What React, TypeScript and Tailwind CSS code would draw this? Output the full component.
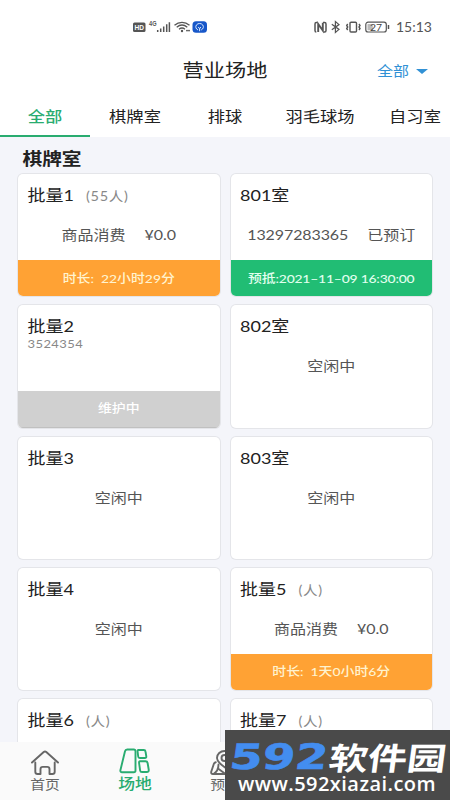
import React from "react";

function StatusBar() {
  return (
    <div className="flex h-[54px] items-center justify-between pl-[133px] pr-[18px] text-[#555]">
      <div className="flex items-center">
        <svg width="76" height="14" viewBox="0 0 76 14" fill="none" stroke="currentColor">
          <rect x="0" y="2.5" width="12.5" height="9.5" rx="1.5" fill="#555" stroke="none" />
          <text x="1.5" y="9.8" fontSize="7" fontWeight="700" fill="#fff" stroke="none" fontFamily="Liberation Sans, sans-serif" textLength="9.500" lengthAdjust="spacingAndGlyphs">HD</text>
          <text x="16" y="6" fontSize="6.500" fontWeight="700" fill="#555" stroke="none" fontFamily="Liberation Sans, sans-serif" textLength="7.500" lengthAdjust="spacingAndGlyphs">4G</text>
          <path d="M24.700 10v2M27.700 8.500v3.500M30.700 6.500V12M33.700 4.200V12M36.400 2.200V12" strokeWidth="1.500" />
          <path d="M41.500 5.200C46 1.300 52 1.300 56.500 5.200M43.700 7.200C47 4.500 51 4.500 54.300 7.200M46 9.200c2-1.600 4-1.600 6 0" strokeWidth="1.300" />
          <circle cx="49" cy="11" r="1.200" fill="currentColor" stroke="none" />
          <path d="M53 10.500h4M54 9.700v2M56 9.700v2" strokeWidth=".8" />
          <rect x="59.500" y="1.200" width="14.500" height="11.600" rx="3.500" fill="#1757c9" stroke="none" />
          <path d="M65 10C62.800 9 62.200 6.600 63.500 4.900c1.500-1.900 4.700-1.900 6.200 0 1.300 1.700.7 4.100-1.500 5.100M65.300 7l1.300 1.800L67.900 7M66.600 8.800v2.400" stroke="#d9e9ff" strokeWidth="1" />
        </svg>
      </div>
      <div className="flex items-center">
        <svg width="78" height="14" viewBox="0 0 78 14" fill="none" stroke="currentColor">
          <path d="M3.600 2.500H2.300Q1 2.500 1 4v6.500Q1 12 2.300 12M9 2.500h1.600Q12 2.500 12 4v6.500q0 1.500-1.300 1.500H9.500" strokeWidth="1.500" />
          <path d="M4.200 12V4L8.800 10.500V2.800" strokeWidth="1.900" />
          <path d="M17.800 4.200l7.200 5.200-3.600 3V1.600l3.600 3-7.200 5.200" strokeWidth="1.200" />
          <rect x="36" y="2.200" width="6.500" height="9.800" rx="1" strokeWidth="1.400" />
          <path d="M33.700 4l-1 1.500 1 1.500-1 1.500 1 1.500M45 4l1 1.500L45 7l1 1.500-1 1.500" strokeWidth="1.400" />
          <rect x="51.800" y="2.200" width="20.500" height="9.800" rx="2.300" strokeWidth="1.200" />
          <rect x="53.500" y="3.900" width="5.300" height="6.400" rx=".5" fill="#bbb" stroke="none" />
          <path d="M74.500 5v4" strokeWidth="1.500" />
          <text x="56" y="10.600" fontSize="9.500" fill="#444" stroke="none" fontFamily="Lato, sans-serif" textLength="12" lengthAdjust="spacingAndGlyphs">27</text>
        </svg>
        <span className="ml-[4px] w-[36px] scale-y-[.9] whitespace-nowrap text-[14px] leading-none">15:13</span>
      </div>
    </div>
  );
}

const squash = "inline-block whitespace-nowrap leading-none scale-y-[.88]";

type Room = {
  name: string;
  people?: string;
  note?: string;
  body?: string[];
  footer?: string;
  tone?: string;
};

const rooms: Room[] = [
  { name: "批量1", people: "(55人)", body: ["商品消费", "¥0.0"], footer: "时长:  22小时29分", tone: "bg-[#ffa234] text-[#fff3cf]" },
  { name: "801室", body: ["13297283365", "已预订"], footer: "预抵:2021–11–09 16:30:00", tone: "bg-[#21bd74] text-[#e0ffee] tracking-[-.2px]" },
  { name: "批量2", note: "3524354", footer: "维护中", tone: "bg-[#d0d0d0] text-white border-b border-[#c0c0c0]" },
  { name: "802室", body: ["空闲中"] },
  { name: "批量3", body: ["空闲中"] },
  { name: "803室", body: ["空闲中"] },
  { name: "批量4", body: ["空闲中"] },
  { name: "批量5", people: "(人)", body: ["商品消费", "¥0.0"], footer: "时长:  1天0小时6分", tone: "bg-[#ffa234] text-[#fff3cf]" },
  { name: "批量6", people: "(人)" },
  { name: "批量7", people: "(人)" },
];

function RoomCard({ room }: { room: Room }) {
  return (
    <div className="flex h-[122.3px] flex-col overflow-hidden rounded-[5px] bg-white shadow-[0_0_0_1px_#e4e5e9]">
      <div className="flex h-[42px] shrink-0 items-center pl-[9.500px]">
        <span className={squash + " text-[18px] text-[#222]"}>{room.name}</span>
        {room.people && <span className={squash + " ml-[12px] mt-[4px] text-[14.500px] tracking-[.7px] text-[#888]"}>{room.people}</span>}
      </div>
      {room.note && <span className={squash + " -mt-[9px] ml-[9.500px] w-fit text-[13px] tracking-[.4px] text-[#888]"}>{room.note}</span>}
      {room.body && (
        <div className="flex h-[38px] items-center justify-center gap-[19px] text-[16px] text-[#555]">
          {room.body.map((t) => (
            <span key={t} className={squash + (t.length > 6 ? " -tracking-[.1px]" : "")}>{t}</span>
          ))}
        </div>
      )}
      {room.footer && (
        <div className={"mt-auto flex h-[36.500px] items-center justify-center pt-px " + room.tone}>
          <span className="inline-block scale-y-[.88] whitespace-pre text-[13.900px] font-medium leading-none">{room.footer}</span>
        </div>
      )}
    </div>
  );
}

const tabs = [
  { label: "全部", width: "w-[90px]" },
  { label: "棋牌室", width: "w-[90px]" },
  { label: "排球", width: "w-[90px]" },
  { label: "羽毛球场", width: "w-[100px]" },
  { label: "自习室", width: "w-[90px]" },
];

function BottomNav() {
  return (
    <nav className="absolute bottom-0 left-0 flex h-[58px] w-[450px] bg-[#fafafa] text-[#666]">
      <div className="flex w-[90px] flex-col items-center pt-[7px]">
        <svg width="30" height="27" viewBox="0 0 30 27" fill="none" stroke="currentColor" strokeWidth="1.900" strokeLinecap="round" strokeLinejoin="round">
          <path d="M2 13.500L13.700 3q1.300-1.100 2.600 0L28 13.500M5.300 13.500v9.200q0 2.300 2.300 2.300h2.900v-4.800q0-2.300 2.300-2.300h4.400q2.300 0 2.300 2.300V25h2.900q2.300 0 2.300-2.300v-9.200" />
        </svg>
        <span className={squash + " mt-px text-[14.800px]"}>首页</span>
      </div>
      <div className="flex w-[90px] flex-col items-center pt-[5px] text-[#29ac70]">
        <svg width="32" height="27" viewBox="0 0 32 27" fill="none" stroke="currentColor" strokeWidth="1.900" strokeLinejoin="round">
          <path d="M8.200 2.500h6.600q1.700 0 1.700 1.700v19.200q0 1.800-1.800 1.800H3.100q-2.100 0-1.700-2L6 4.300q.4-1.800 2.200-1.800z" />
          <path d="M19.300 3h5.500q1.500 0 1.700 1.500l.8 4.800q.2 1.700-1.500 1.700h-5q-1.500 0-1.600-1.500l-.6-5q-.1-1.500.7-1.500z" />
          <path d="M21 14.300h5.500q1.800 0 2.100 1.700l1.100 6.500q.4 2.500-2 2.500h-4.700q-1.700 0-1.900-1.700l-1-7.200q-.2-1.800.9-1.800z" />
        </svg>
        <span className={squash + " mt-[2px] text-[16.800px] font-medium"}>场地</span>
      </div>
      <div className="flex w-[90px] flex-col items-center pt-[8px]">
        <svg width="30" height="26" viewBox="0 0 30 26" fill="none" stroke="currentColor" strokeWidth="1.900" strokeLinejoin="round" strokeLinecap="round">
          <path d="M15 17.500C10 14 7 11.500 7 8a7.500 7 0 0 1 15 0c0 3.500-2 6-7 9.500z" />
          <circle cx="14.500" cy="8" r="3" />
          <path d="M5.800 12.200Q4.300 12.500 3.800 14L1.300 21.500Q.7 24 3 24h24q2.300 0 1.700-2.500L26.200 14q-.5-1.500-2-1.800M8.500 14.500Q8.500 21 3.500 24M8 18.500L15.500 24" />
        </svg>
        <span className={squash + " mt-px text-[14.800px]"}>预订</span>
      </div>
    </nav>
  );
}

function SiteBadge() {
  return (
    <div className="absolute bottom-0 right-0 flex h-[70px] w-[225px] flex-col overflow-hidden bg-[#4a4a4a]">
      <div className="flex h-[43px] items-center pl-[5px] pt-[12px]">
        <span className="inline-block w-[98px] origin-left scale-x-[1.340] -skew-x-6 font-['DejaVu_Sans',sans-serif] text-[35px] font-bold leading-none text-[#438df0] [-webkit-text-stroke:.6px_#438df0]">592</span>
        <span className="ml-[1px] inline-block origin-center -skew-x-6 scale-y-[.8] whitespace-nowrap text-[39.200px] font-bold leading-none text-white">软件园</span>
      </div>
      <span className="mt-[1px] pl-[13px] font-['Open_Sans',sans-serif] text-[20px] font-semibold leading-none tracking-[.45px] text-white">www.592xiazai.com</span>
    </div>
  );
}

export default function App() {
  return (
    <div className="relative h-[800px] w-[450px] overflow-hidden bg-[#f4f5fa] font-['Lato','Noto_Sans_CJK_SC',sans-serif]">
      <header className="bg-white">
        <StatusBar />
        <div className="grid h-[34px] grid-cols-[1fr_auto_1fr] items-center">
          <span className={squash + " col-start-2 text-[21.200px] text-[#222]"}>营业场地</span>
          <div className="flex items-center justify-end gap-[7px] pr-[22px] text-[#3191d5]">
            <span className={squash + " text-[16px]"}>全部</span>
            <i className="h-0 w-0 border-x-[6.500px] border-t-[5.500px] border-x-transparent border-t-[#3191d5]" />
          </div>
        </div>
        <div className="flex h-[48.500px] w-[460px] text-[17.300px]">
          {tabs.map((t, i) => (
            <div key={t.label} className={"flex shrink-0 items-center justify-center border-b-2 pt-[10px] " + t.width + (i === 0 ? " border-[#29ac70] font-medium text-[#29ac70]" : " border-transparent text-[#222]")}>
              <span className={squash}>{t.label}</span>
            </div>
          ))}
        </div>
      </header>
      <main>
        <h2 className="flex h-[37.500px] items-center pl-[22.500px] pt-[7px] text-[19.700px] font-bold text-[#222]">
          <span className={squash}>棋牌室</span>
        </h2>
        <div className="grid grid-cols-2 gap-x-[11px] gap-y-[9px] pl-[18px] pr-[18px]">
          {rooms.map((r) => (
            <RoomCard key={r.name} room={r} />
          ))}
        </div>
      </main>
      <BottomNav />
      <SiteBadge />
    </div>
  );
}
